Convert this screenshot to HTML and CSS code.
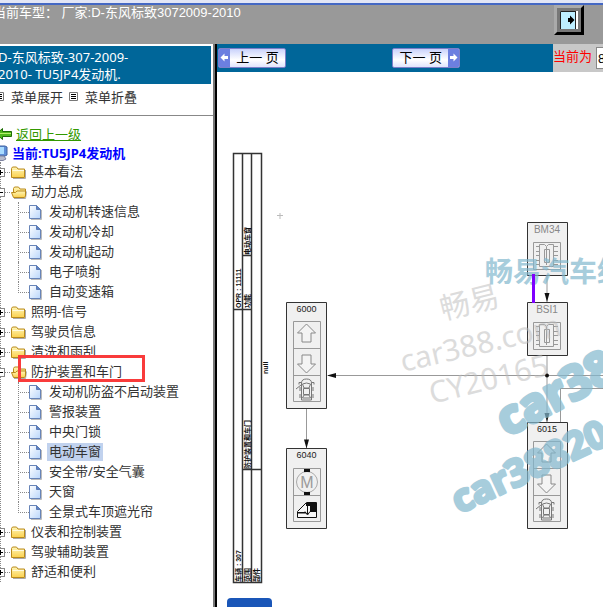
FILE: index.html
```html
<!DOCTYPE html>
<html lang="zh-CN">
<head>
    <meta charset="UTF-8">
    <meta name="viewport" content="width=device-width, initial-scale=1.0">
    <title>D-东风标致-307-2009-2010</title>
    <link rel="stylesheet" href="styles.css">
</head>
<body>

<!-- 公用图标 -->
<svg class="icon-defs" width="0" height="0" aria-hidden="true">
    <defs>
        <linearGradient id="gold" x1="0" y1="0" x2="0" y2="1">
            <stop offset="0" stop-color="#fff6b8"/>
            <stop offset="1" stop-color="#fbd14e"/>
        </linearGradient>
        <linearGradient id="paper" x1="0" y1="0" x2="1" y2="1">
            <stop offset="0" stop-color="#ffffff"/>
            <stop offset="1" stop-color="#b9d6fb"/>
        </linearGradient>
    </defs>
    <symbol id="folder" viewBox="0 0 16 16">
        <path d="M2 14.500h12.500V6" fill="none" stroke="#aaa"/>
        <path d="M.5 13.500V4.500l1-1.500h4l1.500 2h6.500v8.500z" fill="url(#gold)" stroke="#b98a1c"/>
        <path d="M1.500 6.500h11.500" stroke="#fffbe0"/>
    </symbol>
    <symbol id="folder-open" viewBox="0 0 16 16">
        <path d="M3 14.500h11.500l1-7" fill="none" stroke="#aaa"/>
        <path d="M2.500 12V4.500l1-1.500h4l1.500 2h5.500v7" fill="url(#gold)" stroke="#b98a1c"/>
        <path d="M2.500 13.500l-2-5h4l1.500-1.500h8.500v5l-1 1.500z" fill="url(#gold)" stroke="#b98a1c"/>
    </symbol>
    <symbol id="page" viewBox="0 0 13 16">
        <path d="M2 15.500h10.500V6" fill="none" stroke="#bbb"/>
        <path d="M.5 1.500h7l4 4v9H.5z" fill="url(#paper)" stroke="#6784b8"/>
        <path d="M7.500 1.500v4h4z" fill="#5e83c4" stroke="#5e7cb4"/>
    </symbol>
    <symbol id="list" viewBox="0 0 9 9">
        <path d="M.5.5h8v8h-8z" fill="#fff" stroke="#777"/>
        <path d="M2 2.500h5M2 4.500h5M2 6.500h5" stroke="#000"/>
    </symbol>
</svg>

<header class="top-bar">
    <div class="car-info">当前车型： 厂家:D-东风标致3072009-2010</div>
    <button class="exit-button" type="button" aria-label="退出">
        <svg width="18" height="18" viewBox="0 0 18 18">
            <path d="M0 0h18v18H0z" fill="#bdeeff"/>
            <path d="M.5 18V.5H17" fill="none" stroke="#222"/>
            <path d="M15 1h1v17h-1z" fill="#222"/>
            <path d="M16 0h2v18h-2z" fill="#fff"/>
            <path d="M8 7h2V4.500l4.500 4.500-4.500 4.500V11H8z" fill="#000"/>
        </svg>
    </button>
</header>

<div class="frames">
    <nav class="sidebar">
        <h1 class="side-title">D-东风标致-307-2009-<br>2010- TU5JP4发动机.</h1>
        <div class="menu-tools">
            <a href="#"><svg class="list-icon"><use href="#list"/></svg>菜单展开</a>
            <a href="#"><svg class="list-icon"><use href="#list"/></svg>菜单折叠</a>
        </div>

        <div class="back-row">
            <svg class="back-icon" width="16" height="14" viewBox="0 0 16 14">
                <path d="M.5 7l6-5.500v3h9v5h-9v3z" fill="#4fb81c" stroke="#1f6d08"/>
                <path d="M3 6.500h12" stroke="#b4ee6a"/>
            </svg>
            <a class="back-link" href="#">返回上一级</a>
        </div>
        <div class="current-row">
            <svg class="pc-icon" width="14" height="16" viewBox="0 0 14 16">
                <path d="M1 1h10l2 1v8l-2 1H1z" fill="#5f8fd8" stroke="#3f62a0"/>
                <path d="M2 2h8v7H2z" fill="#a9dcff"/>
                <path d="M3 11h7l2 3-3 1.500H3z" fill="#b8bccb" stroke="#7d82a0"/>
            </svg>
            <strong>当前:TU5JP4发动机</strong>
        </div>

        <ul class="tree">
            <li>
                <div class="node"><button class="toggle plus" type="button" aria-label="展开"></button><svg class="folder-icon"><use href="#folder"/></svg><a href="#">基本看法</a></div>
            </li>
            <li>
                <div class="node"><button class="toggle" type="button" aria-label="折叠"></button><svg class="folder-icon"><use href="#folder-open"/></svg><a href="#">动力总成</a></div>
                <ul class="leaves">
                    <li><svg class="page-icon"><use href="#page"/></svg><a href="#">发动机转速信息</a></li>
                    <li><svg class="page-icon"><use href="#page"/></svg><a href="#">发动机冷却</a></li>
                    <li><svg class="page-icon"><use href="#page"/></svg><a href="#">发动机起动</a></li>
                    <li><svg class="page-icon"><use href="#page"/></svg><a href="#">电子喷射</a></li>
                    <li><svg class="page-icon"><use href="#page"/></svg><a href="#">自动变速箱</a></li>
                </ul>
            </li>
            <li>
                <div class="node"><button class="toggle plus" type="button" aria-label="展开"></button><svg class="folder-icon"><use href="#folder"/></svg><a href="#">照明-信号</a></div>
            </li>
            <li>
                <div class="node"><button class="toggle plus" type="button" aria-label="展开"></button><svg class="folder-icon"><use href="#folder"/></svg><a href="#">驾驶员信息</a></div>
            </li>
            <li>
                <div class="node"><button class="toggle plus" type="button" aria-label="展开"></button><svg class="folder-icon"><use href="#folder"/></svg><a href="#">清洗和雨刮</a></div>
            </li>
            <li>
                <div class="node marked"><button class="toggle" type="button" aria-label="折叠"></button><svg class="folder-icon"><use href="#folder-open"/></svg><a href="#">防护装置和车门</a></div>
                <ul class="leaves">
                    <li><svg class="page-icon"><use href="#page"/></svg><a href="#">发动机防盗不启动装置</a></li>
                    <li><svg class="page-icon"><use href="#page"/></svg><a href="#">警报装置</a></li>
                    <li><svg class="page-icon"><use href="#page"/></svg><a href="#">中央门锁</a></li>
                    <li><svg class="page-icon"><use href="#page"/></svg><a class="selected" href="#">电动车窗</a></li>
                    <li><svg class="page-icon"><use href="#page"/></svg><a href="#">安全带/安全气囊</a></li>
                    <li><svg class="page-icon"><use href="#page"/></svg><a href="#">天窗</a></li>
                    <li><svg class="page-icon"><use href="#page"/></svg><a href="#">全景式车顶遮光帘</a></li>
                </ul>
            </li>
            <li>
                <div class="node"><button class="toggle plus" type="button" aria-label="展开"></button><svg class="folder-icon"><use href="#folder"/></svg><a href="#">仪表和控制装置</a></div>
            </li>
            <li>
                <div class="node"><button class="toggle plus" type="button" aria-label="展开"></button><svg class="folder-icon"><use href="#folder"/></svg><a href="#">驾驶辅助装置</a></div>
            </li>
            <li>
                <div class="node"><button class="toggle plus" type="button" aria-label="展开"></button><svg class="folder-icon"><use href="#folder"/></svg><a href="#">舒适和便利</a></div>
            </li>
        </ul>
    </nav>

    <main class="content">
        <div class="toolbar">
            <div class="pager">
                <button class="page-button" type="button">
                    <svg width="11" height="18" viewBox="0 0 11 18"><path d="M0 0h11v18H0z" fill="#6c7fe0"/><path d="M1.500 8.500l4-4V7H9v3H5.500v2.500z" fill="#fff"/></svg>
                    <span>上一 页</span>
                </button>
                <button class="page-button" type="button">
                    <span>下一 页</span>
                    <svg width="11" height="18" viewBox="0 0 11 18"><path d="M0 0h11v18H0z" fill="#6c7fe0"/><path d="M9.500 8.500l-4-4V7H2v3h3.500v2.500z" fill="#fff"/></svg>
                </button>
            </div>
            <div class="current-page">
                <label for="pageNo">当前为</label>
                <input id="pageNo" type="text" value="8">
            </div>
        </div>

        <!-- 电路图 -->
        <svg class="diagram" width="386" height="526" viewBox="217 72 386 526">
            <defs>
                <g id="arrow-up" fill="#f4f4f4" stroke="#888">
                    <path d="M13.500 3l9 9h-4.500v9h-9v-9h-4.500z"/>
                </g>
                <g id="arrow-down" fill="#f4f4f4" stroke="#888">
                    <path d="M13.500 25l9-9h-4.500V7h-9v9h-4.500z"/>
                </g>
                <g id="car" fill="none" stroke="#777">
                    <path d="M8.500 24V7q0-4 5-4t5 4v17z"/>
                    <path d="M9.500 8q4-2 8 0l-1.500 4h-5zM10.500 12.500h6v6h-6zM9.500 22l1.500-3h5l1.500 3z"/>
                    <path d="M8 9l-5 4M8 6.500H6v2M19 6.500h2v2M7 11v4M20 11v4M7 18v4M20 18v4"/>
                </g>
                <g id="chip" fill="none" stroke="#999">
                    <path d="M.5.5h27v27h-27z"/>
                    <path d="M6.500 2.500h5l2 2 2-2h5v22h-14z"/>
                    <path d="M11.500 7.500h5v13h-5zM13.500 5v18"/>
                    <path d="M3 4.500h4M3 9.500h4M3 13.500h4M3 18.500h4M3 22.500h4M21 4.500h4M21 9.500h4M21 13.500h4M21 18.500h4M21 22.500h4"/>
                </g>
            </defs>

            <!-- 标题栏 -->
            <g fill="none" stroke="#333" stroke-width="1.500">
                <path d="M233.500 153.500h28v429h-28z"/>
                <path d="M242.500 153v430M251.500 153v430"/>
                <path d="M233 309.500h18M243 255.500h9M243 469.500h18"/>
            </g>
            <g class="table-text">
                <text transform="translate(241 308) rotate(-90)">OPR : 11111</text>
                <text transform="translate(241 582) rotate(-90)">车辆 : 307</text>
                <text transform="translate(250 308) rotate(-90)">功能</text>
                <text transform="translate(250 255) rotate(-90)">电动车窗</text>
                <text transform="translate(250 469) rotate(-90)">防护装置和车门</text>
                <text transform="translate(250 582) rotate(-90)">范围</text>
                <text transform="translate(259 582) rotate(-90)">部件</text>
                <text transform="translate(268 374) rotate(-90)">null</text>
            </g>
            <path d="M277 215.500h6M280 213v6" stroke="#bbb"/>

            <!-- 连线 -->
            <g fill="none" stroke="#999">
                <path d="M328 375.500h275M306.500 408v40M547 275v27M547 355v67"/>
                <path d="M560.500 422v-33.500h43"/>
            </g>
            <g fill="#111">
                <path d="M327 375.500l9-2.500v5zM306.500 448.500l-2.500-9h5zM547 302l-2.500-9h5zM547 422l-2.500-9h5z"/>
                <circle cx="547" cy="375.500" r="2"/>
            </g>

            <!-- 元件 -->
            <g fill="#f0f0f0" stroke="#333">
                <path d="M286.500 302.500h40v106h-40zM286.500 448.500h40v80h-40zM527.500 222.500h40v53h-40zM527.500 302.500h40v53h-40zM527.500 422.500h40v106h-40z"/>
            </g>
            <g fill="none" stroke="#999">
                <path d="M293.500 321.500h27v80h-27zM293.500 348.500h27M293.500 375.500h27"/>
                <path d="M293.500 468.500h27v53h-27zM293.500 495.500h27"/>
                <path d="M533.500 441.500h27v80h-27zM533.500 468.500h27M533.500 495.500h27"/>
            </g>
            <use href="#arrow-up" x="293" y="321"/>
            <use href="#arrow-down" x="293" y="348"/>
            <use href="#car" x="293" y="376"/>
            <use href="#arrow-up" x="533" y="441"/>
            <use href="#arrow-down" x="533" y="468"/>
            <use href="#car" x="533" y="496"/>
            <use href="#chip" x="533" y="242"/>
            <use href="#chip" x="533" y="322"/>
            <circle cx="307" cy="482" r="10.500" fill="none" stroke="#aaa"/>
            <path d="M304 469h6v3h-6zM304 492h6v3h-6z" fill="#111"/>
            <path d="M297.500 517.500v-6l9-9h10v15z" fill="#f8f8f8" stroke="#111"/>
            <path d="M306 503h10v9h-6v-6h-4zM298 512h8v1.500h-8z" fill="#111"/>
            <path d="M307.500 506v8M305 511.500l2.500 3.500 2.500-3.500" fill="none" stroke="#111"/>
            <g class="part-text">
                <text x="306.500" y="312">6000</text>
                <text x="306.500" y="458">6040</text>
                <text x="547" y="432">6015</text>
            </g>
            <text class="part-light" x="547" y="233">BM34</text>
            <text class="part-light" x="547" y="313">BSI1</text>
            <text class="motor-text" x="307" y="488">M</text>

            <!-- 水印 -->
            <g class="mark-gray">
                <text transform="translate(443 320) rotate(-14)">畅易</text>
                <text transform="translate(403 372) rotate(-13)">car388.com</text>
                <text transform="translate(432 404) rotate(-14)">CY20165</text>
            </g>
            <g class="mark-blue">
                <text class="mark-title" x="485" y="282">畅易汽车维修</text>
                <text class="mark-big" transform="translate(507 437) rotate(-28)">car388</text>
                <text class="mark-small" transform="translate(459 514) rotate(-25)">car38820</text>
            </g>
            <path d="M533.500 274v29" stroke="#7f00ff" stroke-width="3"/>
        </svg>

        <button class="bottom-button" type="button" aria-label="更多"></button>
    </main>
</div>

</body>
</html>
```

FILE: styles.css
```css
*, *::before, *::after {
    box-sizing: border-box;
}
body {
    margin: 0;
    height: 100vh;
    display: flex;
    flex-direction: column;
    overflow: hidden;
    background-color: #fff;
    color: #333;
    font-family: "Noto Sans", "Noto Sans CJK SC", sans-serif;
    font-size: 13px;
}
a {
    color: inherit;
    text-decoration: none;
}
button {
    padding: 0;
    cursor: pointer;
}
ul {
    margin: 0;
    padding: 0;
    list-style: none;
}
.icon-defs {
    position: absolute;
}

/* 顶部 */
.top-bar {
    flex: none;
    display: flex;
    justify-content: space-between;
    height: 44px;
    padding-right: 19px;
    border-top: 3px solid #e2e6f6;
    background-color: #999;
    box-shadow: inset 0 2px 0 #4468c4;
}
.car-info {
    margin-left: -7px;
    padding-top: 2px;
    line-height: 15px;
    white-space: nowrap;
    color: #fff;
    font-family: "Liberation Sans", "Noto Sans CJK SC", sans-serif;
}
.exit-button {
    display: flex;
    align-items: center;
    justify-content: center;
    width: 30px;
    height: 30px;
    margin-top: 2px;
    background-color: #777;
    border: 3px solid;
    border-color: #aaa #000 #000 #aaa;
}

.frames {
    flex: 1;
    min-height: 0;
    display: flex;
}

/* 左侧菜单 */
.sidebar {
    flex: none;
    width: 217px;
    border-right: 2px solid #000;
    box-shadow: inset -2px 0 0 #777;
    overflow: hidden;
}
.side-title {
    margin: 2px 4px 0 -2px;
    height: 38px;
    padding: 3px 0;
    background-color: #069;
    color: #fff;
    font-size: 13px;
    font-weight: normal;
    line-height: 17px;
}
.menu-tools {
    display: flex;
    gap: 6px;
    height: 32px;
    margin: 0 2px 8px 0;
    padding: 2px 0 0;
    border-bottom: 1px solid #888;
}
.menu-tools a {
    display: flex;
    align-items: center;
    height: 20px;
    gap: 7px;
}
.menu-tools a:first-child {
    margin-left: -5px;
}
.list-icon {
    width: 9px;
    height: 9px;
}
.back-row, .current-row {
    display: flex;
    align-items: center;
    gap: 4px;
    height: 19px;
}
.current-row {
    color: #00f;
}
.back-icon {
    margin-left: -4px;
}
.pc-icon {
    margin-left: -6px;
}
.back-link {
    color: #390;
    text-decoration: underline;
}

/* 树 */
.tree {
    border-left: 1px dotted #888;
}
.node, .leaves li {
    display: flex;
    align-items: center;
    height: 20px;
}
.node a, .leaves a {
    height: 18px;
    line-height: 17px;
}
.toggle {
    position: relative;
    width: 9px;
    height: 9px;
    margin-left: -5px;
    margin-right: 6px;
    background: linear-gradient(#000, #000) center / 5px 1px no-repeat #fff;
    border: 1px solid #888;
}
.toggle.plus {
    background: linear-gradient(#000, #000) center / 5px 1px no-repeat, linear-gradient(#000, #000) center / 1px 5px no-repeat #fff;
}
.toggle::after {
    content: "";
    position: absolute;
    left: 8px;
    top: 3px;
    width: 5px;
    border-top: 1px dotted #888;
}
.folder-icon {
    width: 16px;
    height: 16px;
    margin-right: 4px;
}
.marked {
    position: relative;
}
.marked::after {
    content: "";
    position: absolute;
    left: 17px;
    top: -7px;
    width: 127px;
    height: 27px;
    border: 3px solid #f93b3b;
}
.leaves {
    margin-left: 17px;
}
.leaves li {
    position: relative;
    padding-left: 11px;
}
.leaves li::before {
    content: "";
    position: absolute;
    left: 0;
    top: 0;
    height: 20px;
    border-left: 1px dotted #888;
}
.leaves li:last-child::before {
    height: 11px;
}
.leaves li::after {
    content: "";
    position: absolute;
    left: 2px;
    top: 10px;
    width: 9px;
    border-top: 1px dotted #888;
}
.page-icon {
    width: 13px;
    height: 16px;
    margin-right: 5px;
}
.leaves a {
    padding: 0 2px;
}
.leaves .selected {
    background-color: #c1d2ee;
}

/* 右侧 */
.content {
    flex: 1;
    min-width: 0;
    display: flex;
    flex-direction: column;
    overflow: hidden;
}
.toolbar {
    flex: none;
    display: flex;
    height: 28px;
}
.pager {
    flex: 1;
    display: grid;
    grid-template-columns: 13fr 12fr;
    align-items: center;
    justify-items: start;
    padding-left: 1px;
    background-color: #069;
}
.page-button {
    display: flex;
    align-items: center;
    width: 68px;
    height: 20px;
    background: linear-gradient(#c9d2fb, #fff 60%, #dfe4fc);
    border: 1px solid #7d7fc8;
    border-radius: 2px;
    overflow: hidden;
    color: #000;
    font-family: "Liberation Sans", "Noto Sans CJK SC", sans-serif;
    font-size: 13px;
}
.page-button span {
    flex: 1;
    text-align: center;
    line-height: 18px;
}
.current-page {
    flex: none;
    display: flex;
    align-items: center;
    gap: 4px;
    width: 50px;
    overflow: hidden;
    background-color: #c8c8c8;
    color: #f00;
    white-space: nowrap;
}
.current-page label {
    line-height: 24px;
    height: 28px;
}
.current-page input {
    flex: none;
    width: 40px;
    height: 22px;
    padding: 0 1px;
    border: 1px solid #888;
    font-family: "Liberation Sans", sans-serif;
    font-size: 13px;
}
.diagram {
    flex: none;
    display: block;
}
.table-text {
    fill: #111;
    font-family: "Liberation Sans", "Noto Sans CJK SC", sans-serif;
    font-size: 7px;
    font-weight: bold;
}
.part-text, .part-light, .motor-text {
    fill: #222;
    font-family: "Liberation Sans", sans-serif;
    font-size: 9px;
    text-anchor: middle;
}
.part-light {
    fill: #888;
    font-size: 10px;
}
.motor-text {
    fill: #999;
    font-size: 16px;
}
.mark-gray {
    fill: #bbb;
    font-size: 30px;
    opacity: 0.5;
}
.mark-blue {
    fill: #83b8ce;
    stroke: #83b8ce;
    stroke-linejoin: round;
    opacity: 0.7;
    font-weight: bold;
}
.mark-title {
    font-size: 28px;
    stroke: none;
}
.mark-big {
    font-size: 47px;
    stroke-width: 4px;
}
.mark-small {
    font-size: 38px;
    stroke-width: 3px;
}
.bottom-button {
    flex: none;
    width: 45px;
    height: 30px;
    margin-left: 10px;
    background-color: #1a56b8;
    border: none;
    border-radius: 4px;
}
```
